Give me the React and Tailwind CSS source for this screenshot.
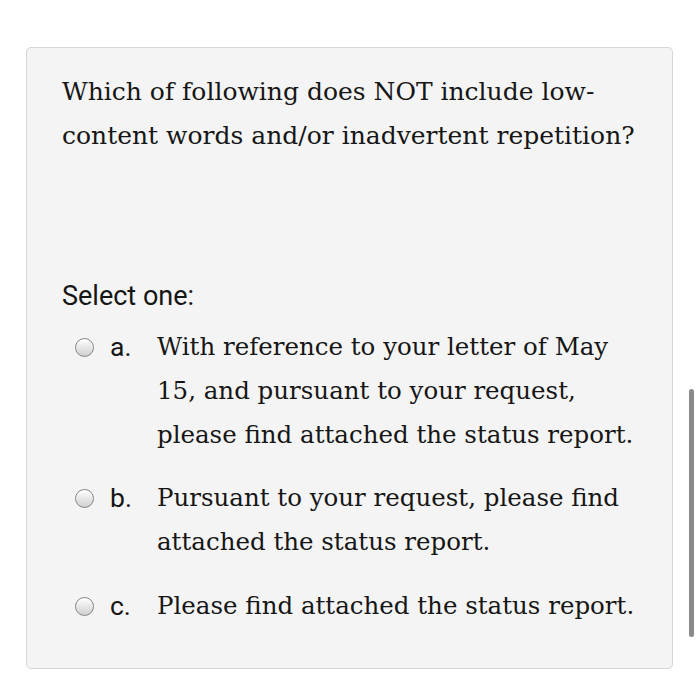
export default function App() {
  const serif = { fontFamily: '"DejaVu Serif", "Liberation Serif", serif' };
  const sans = { fontFamily: 'Roboto, "Liberation Sans", sans-serif' };
  const Radio = () => (
    <span className="block w-[19px] h-[19px] rounded-full border border-[#858585] bg-linear-to-b from-white to-[#cfcfcf] shadow-[inset_0_1px_1px_rgba(255,255,255,0.9)]" />
  );
  const Option = ({ letter, lines, className }) => (
    <div className={"flex items-start " + (className || "")}>
      <div className="flex items-center h-[44px] w-[49px] pl-[13px]">
        <Radio />
      </div>
      <div className="w-[47px] h-[44px] flex items-center text-[26.5px] text-[#161616] -ml-[1px]" style={sans}>{letter}</div>
      <div className="text-[24.5px] leading-[44px] text-[#161616]" style={serif}>
        {lines.map((l, i) => (
          <div key={i} className="whitespace-nowrap">{l}</div>
        ))}
      </div>
    </div>
  );
  return (
    <div className="relative w-[700px] h-[700px] bg-white overflow-hidden">
      <div className="ml-[26px] pt-[47px]">
        <div className="w-[647px] h-[622px] bg-[#f4f4f4] border border-[#d6d6d6] rounded-[5px] pl-[35px] pr-[30px] pt-[22px]">
          <div className="text-[25px] leading-[44px] text-[#161616]" style={serif}>
            <div className="whitespace-nowrap">Which of following does NOT include low-</div>
            <div className="whitespace-nowrap">content words and/or inadvertent repetition?</div>
          </div>
          <div className="mt-[116px] text-[27px] leading-[44px] text-[#161616]" style={sans}>
            Select one:
          </div>
          <div className="mt-[7px]">
            <Option letter="a." lines={["With reference to your letter of May", "15, and pursuant to your request,", "please find attached the status report."]} />
            <Option className="mt-[19px]" letter="b." lines={["Pursuant to your request, please find", "attached the status report."]} />
            <Option className="mt-[20px]" letter="c." lines={["Please find attached the status report."]} />
          </div>
        </div>
      </div>
      <div className="absolute left-[689px] top-[389px] w-[5px] h-[248px] rounded-full bg-[#8a8a8a]" />
    </div>
  );
}
